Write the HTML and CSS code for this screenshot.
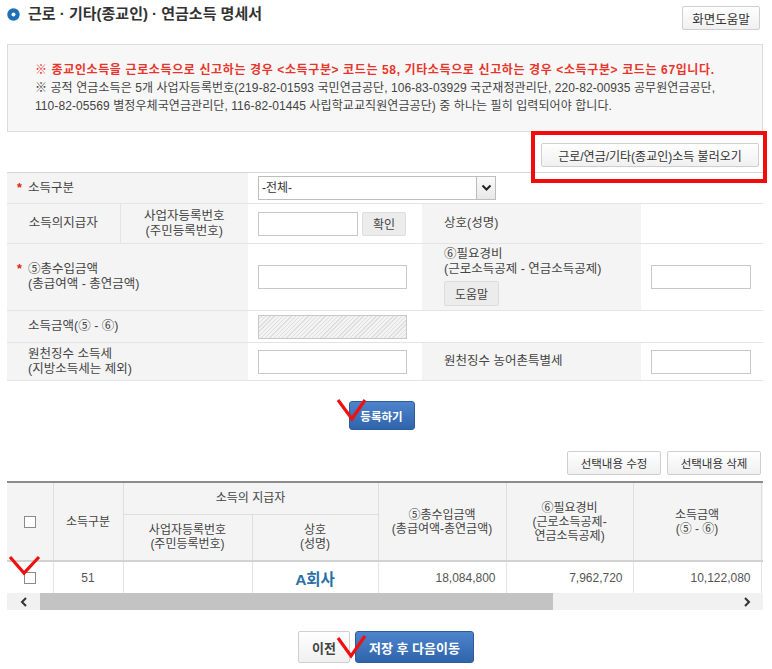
FILE: index.html
```html
<!DOCTYPE html>
<html lang="ko">
<head>
<meta charset="utf-8">
<title>근로 · 기타(종교인) · 연금소득 명세서</title>
<link rel="stylesheet" href="styles.css">
</head>
<body>
<div class="page">
  <div class="head">
    <h1 class="title">
      <svg class="title-icon" width="13" height="13" viewBox="0 0 13 13"><circle cx="6.5" cy="6.5" r="6.2" fill="#1d6fb8"/><circle cx="6.5" cy="6.5" r="2" fill="#fff"/></svg>
      <span>근로 · 기타(종교인) · 연금소득 명세서</span>
    </h1>
    <button class="btn btn-help">화면도움말</button>
  </div>

  <div class="notice">
    <p class="notice-red">※ 종교인소득을 근로소득으로 신고하는 경우 &lt;소득구분&gt; 코드는 58, 기타소득으로 신고하는 경우 &lt;소득구분&gt; 코드는 67입니다.</p>
    <p>※ 공적 연금소득은 5개 사업자등록번호(219-82-01593 국민연금공단, 106-83-03929 국군재정관리단, 220-82-00935 공무원연금공단,</p>
    <p>110-82-05569 별정우체국연금관리단, 116-82-01445 사립학교교직원연금공단) 중 하나는 필히 입력되어야 합니다.</p>
  </div>

  <div class="loadrow">
    <button class="btn btn-load">근로/연금/기타(종교인)소득 불러오기</button>
  </div>

  <table class="form">
    <colgroup><col class="c1"><col class="c2"><col class="c3"><col class="c4"><col class="c5"></colgroup>
    <tr class="r1">
      <th colspan="2" class="lbl"><span class="req">*</span>소득구분</th>
      <td colspan="3" class="val">
        <div class="select"><span class="select-text">-전체-</span><span class="select-arrow"><svg width="11" height="8" viewBox="0 0 11 8"><polyline points="1.5,1.5 5.5,5.5 9.5,1.5" fill="none" stroke="#222" stroke-width="2"/></svg></span></div>
      </td>
    </tr>
    <tr class="r2">
      <th class="lbl center sep">소득의지급자</th>
      <th class="lbl center">사업자등록번호<br>(주민등록번호)</th>
      <td class="val"><div class="inline"><input class="inp w100" type="text"><button class="btn-sub">확인</button></div></td>
      <th class="lbl right">상호(성명)</th>
      <td class="val"></td>
    </tr>
    <tr class="r3">
      <th colspan="2" class="lbl"><div class="reqwrap"><span class="req">*</span><span>⑤총수입금액<br>(총급여액 - 총연금액)</span></div></th>
      <td class="val"><input class="inp w150" type="text"></td>
      <th class="lbl right top">⑥필요경비<br>(근로소득공제 - 연금소득공제)<br><button class="btn-sub btn-guide">도움말</button></th>
      <td class="val"><input class="inp w100" type="text"></td>
    </tr>
    <tr class="r4">
      <th colspan="2" class="lbl pad">소득금액(⑤ - ⑥)</th>
      <td class="val"><input class="inp w150 disabled" type="text" disabled></td>
      <td colspan="2" class="val"></td>
    </tr>
    <tr class="r5">
      <th colspan="2" class="lbl pad">원천징수 소득세<br>(지방소득세는 제외)</th>
      <td class="val"><input class="inp w150" type="text"></td>
      <th class="lbl right">원천징수 농어촌특별세</th>
      <td class="val"><input class="inp w100" type="text"></td>
    </tr>
  </table>

  <div class="regrow">
    <button class="btn-blue btn-reg">등록하기</button>
  </div>

  <div class="actrow">
    <button class="btn btn-act">선택내용 수정</button>
    <button class="btn btn-act">선택내용 삭제</button>
  </div>

  <div class="grid-wrap">
    <table class="grid">
      <colgroup><col class="g1"><col class="g2"><col class="g3"><col class="g4"><col class="g5"><col class="g6"><col class="g7"><col class="g8"></colgroup>
      <tr class="h1">
        <th rowspan="2"><input class="chk" type="checkbox"></th>
        <th rowspan="2">소득구분</th>
        <th colspan="2">소득의 지급자</th>
        <th rowspan="2">⑤총수입금액<br>(총급여액-총연금액)</th>
        <th rowspan="2">⑥필요경비<br>(근로소득공제-<br>연금소득공제)</th>
        <th rowspan="2">소득금액<br>(⑤ - ⑥)</th>
        <th rowspan="2"></th>
      </tr>
      <tr class="h2">
        <th>사업자등록번호<br>(주민등록번호)</th>
        <th>상호<br>(성명)</th>
      </tr>
      <tr class="d1">
        <td class="center"><input class="chk" type="checkbox"></td>
        <td class="center">51</td>
        <td></td>
        <td class="center"><a class="link" href="#">A회사</a></td>
        <td class="num">18,084,800</td>
        <td class="num">7,962,720</td>
        <td class="num">10,122,080</td>
        <td class="num"></td>
      </tr>
    </table>
  </div>
  <div class="scrollbar">
    <span class="sb-arrow"><svg width="8" height="10" viewBox="0 0 8 10"><polyline points="6,1 2,5 6,9" fill="none" stroke="#333" stroke-width="2"/></svg></span>
    <span class="sb-track"><span class="sb-thumb"></span></span>
    <span class="sb-arrow"><svg width="8" height="10" viewBox="0 0 8 10"><polyline points="2,1 6,5 2,9" fill="none" stroke="#333" stroke-width="2"/></svg></span>
  </div>

  <div class="footer">
    <button class="btn btn-prev">이전</button>
    <button class="btn-blue btn-next">저장 후 다음이동</button>
  </div>

  <div class="mark-box"></div>
  <svg class="mark mark-reg" width="32" height="26" viewBox="0 0 32 26"><polyline points="2,2 16,21 29,2" fill="none" stroke="#f01010" stroke-width="3.2"/></svg>
  <svg class="mark mark-row" width="34" height="22" viewBox="0 0 34 22"><polyline points="2,2 16,18 31,2" fill="none" stroke="#f01010" stroke-width="3.2"/></svg>
  <svg class="mark mark-next" width="32" height="26" viewBox="0 0 32 26"><polyline points="2,4 15,22 29,2" fill="none" stroke="#f01010" stroke-width="3.2"/></svg>
</div>
</body>
</html>
```

FILE: styles.css
```css
* { box-sizing: border-box; }

body {
  margin: 0;
  background: #fff;
  font-family: "Liberation Sans", "Noto Sans CJK KR", sans-serif;
  font-size: 12px;
  color: #444;
}

p { margin: 0; }

.page {
  position: relative;
  width: 772px;
  padding: 0 9px 0 7px;
}

/* header */
.head {
  display: flex;
  justify-content: space-between;
  align-items: flex-start;
  height: 44px;
  padding-top: 6px;
  padding-right: 3px;
}

.title {
  display: flex;
  align-items: center;
  gap: 8px;
  margin: 0;
  height: 16px;
  font-size: 15px;
  line-height: 16px;
  font-weight: 700;
  color: #333;
}

.title-icon { display: block; flex: none; }

.btn {
  height: 24px;
  padding: 0 10px;
  border: 1px solid #cfcfcf;
  border-radius: 2px;
  background: linear-gradient(#ffffff, #f0f0f0);
  font-family: inherit;
  font-size: 12px;
  color: #333;
  cursor: pointer;
}

.btn-help { width: 78px; padding: 0; font-size: 12.5px; }

/* notice */
.notice {
  height: 88px;
  border: 1px solid #dcdcdc;
  background: #f7f7f7;
  padding: 16px 0 0 27px;
  line-height: 18px;
  font-size: 12px;
  letter-spacing: 0.08px;
  color: #444;
  white-space: nowrap;
}

.notice-red {
  color: #e8352b;
  font-weight: 700;
  letter-spacing: 0.62px;
}

/* load row */
.loadrow {
  display: flex;
  justify-content: flex-end;
  margin-top: 11px;
  margin-bottom: 5px;
  padding-right: 4px;
}

.btn-load { width: 218px; padding: 0; }

/* form table */
.form {
  width: 756px;
  border-collapse: collapse;
  table-layout: fixed;
  border-top: 1px solid #d6d6d6;
}

.form .c1 { width: 113px; }
.form .c2 { width: 128px; }
.form .c3 { width: 174px; }
.form .c4 { width: 219px; }
.form .c5 { width: 122px; }

.form tr { border-bottom: 1px solid #e4e4e4; }
.form .r1 { height: 31px; }
.form .r2 { height: 40px; }
.form .r3 { height: 67px; }
.form .r4 { height: 32px; }
.form .r5 { height: 38px; }

.form th, .form td { padding: 0; }

.lbl {
  background: #f4f4f4;
  font-weight: 400;
  font-size: 12.5px;
  text-align: left;
  padding-left: 10px !important;
  line-height: 15px;
  color: #444;
}

.lbl.pad { padding-left: 21px !important; }
.lbl.center { text-align: center; padding-left: 0 !important; }
.lbl.sep { border-right: 1px solid #e4e4e4; }
.lbl.right { padding-left: 22px !important; }
.lbl.top { vertical-align: top; padding-top: 3px !important; }

.req {
  display: inline-block;
  width: 11px;
  color: #e02020;
  font-weight: 700;
}

.reqwrap { display: flex; }

.val { padding-left: 10px !important; background: #fff; }

.select {
  display: flex;
  width: 238px;
  height: 24px;
  border: 1px solid #bdbdbd;
  background: #fff;
}

.select-text {
  flex: 1;
  padding-left: 3px;
  line-height: 22px;
  font-size: 12px;
  color: #333;
}

.select-arrow {
  display: flex;
  align-items: center;
  justify-content: center;
  width: 19px;
  border-left: 1px solid #bdbdbd;
  background: linear-gradient(#fafafa, #e8e8e8);
}

.inline { display: flex; align-items: center; gap: 4px; }

.inp {
  display: block;
  height: 24px;
  border: 1px solid #c8c8c8;
  background: #fff;
  font-family: inherit;
  font-size: 12px;
  padding: 0 4px;
}

.w100 { width: 100px; }
.w150 { width: 149px; }

.disabled {
  background: repeating-linear-gradient(-45deg, #dedede 0 1px, #f3f3f3 1px 3px);
}

.btn-sub {
  height: 24px;
  width: 44px;
  padding: 0;
  border: 1px solid #dcdcdc;
  border-radius: 2px;
  background: #ececec;
  font-family: inherit;
  font-size: 12px;
  color: #444;
}

.btn-guide {
  width: 55px;
  height: 25px;
  margin-top: 4px;
}

/* register */
.regrow {
  display: flex;
  justify-content: center;
  margin-top: 20px;
  padding-right: 8px;
}

.btn-blue {
  border: 1px solid #2c5c9e;
  border-radius: 3px;
  background: linear-gradient(#4d84cc, #2f64ab);
  color: #fff;
  font-family: inherit;
  font-size: 11.5px;
  font-weight: 700;
  padding: 0;
  cursor: pointer;
}

.btn-reg { width: 66px; height: 29px; margin-left: 1px; }

.actrow {
  display: flex;
  justify-content: flex-end;
  gap: 6px;
  margin-top: 21px;
  padding-right: 2px;
}

.btn-act { width: 94px; padding: 0; font-size: 11.5px; }

/* grid */
.grid-wrap {
  margin-top: 6px;
  width: 756px;
  overflow: hidden;
  border-top: 2px solid #8c8c8c;
}

.grid {
  width: 900px;
  border-collapse: collapse;
  table-layout: fixed;
  font-size: 12px;
}

.grid .g1 { width: 46px; }
.grid .g2 { width: 70px; }
.grid .g3 { width: 129px; }
.grid .g4 { width: 126px; }
.grid .g5 { width: 128px; }
.grid .g6 { width: 127px; }
.grid .g7 { width: 128px; }
.grid .g8 { width: 146px; }

.grid th {
  background: #f4f4f4;
  font-weight: 400;
  line-height: 14px;
  color: #444;
  border: 1px solid #dedede;
  border-top: 0;
  padding: 0;
}

.grid th:first-child { border-left: 0; }

.grid .h1 { height: 31px; }
.grid .h2 { height: 47px; }
.grid .h2 th { border-bottom: 2px solid #d2d2d2; }
.grid .h1 th[rowspan] { border-bottom: 2px solid #d2d2d2; }

.grid .d1 { height: 32px; }
.grid td {
  border-left: 1px solid #e4e4e4;
  border-right: 1px solid #e4e4e4;
  padding: 0;
  color: #555;
}
.grid td:first-child { border-left: 0; }
.grid .center { text-align: center; }
.grid .num { text-align: right; padding-right: 10px; }

.link {
  color: #2a70a8;
  font-size: 15.5px;
  font-weight: 700;
  text-decoration: none;
}

.chk {
  appearance: none;
  -webkit-appearance: none;
  display: inline-block;
  width: 12px;
  height: 12px;
  margin: 0;
  border: 1px solid #8a8a8a;
  background: #fff;
  vertical-align: middle;
}

.scrollbar {
  display: flex;
  height: 17px;
  background: #f1f1f1;
}

.sb-arrow {
  display: flex;
  align-items: center;
  justify-content: center;
  width: 33px;
  flex: none;
}

.sb-track {
  flex: 1;
  display: flex;
}

.sb-thumb {
  width: 513px;
  background: #c3c3c3;
}

/* footer */
.footer {
  display: flex;
  justify-content: center;
  gap: 5px;
  margin-top: 21px;
  padding-left: 2px;
}

.btn-prev { width: 52px; height: 32px; padding: 0; font-weight: 700; font-size: 13px; color: #444; }
.btn-next { width: 119px; height: 32px; font-size: 13px; }

/* annotations */
.mark-box {
  position: absolute;
  left: 531px;
  top: 131px;
  width: 236px;
  height: 52px;
  border: 4px solid #f20c0c;
  pointer-events: none;
}

.mark { position: absolute; pointer-events: none; }
.mark-reg { left: 336px; top: 398px; }
.mark-row { left: 8px; top: 555px; }
.mark-next { left: 336px; top: 634px; }
```
